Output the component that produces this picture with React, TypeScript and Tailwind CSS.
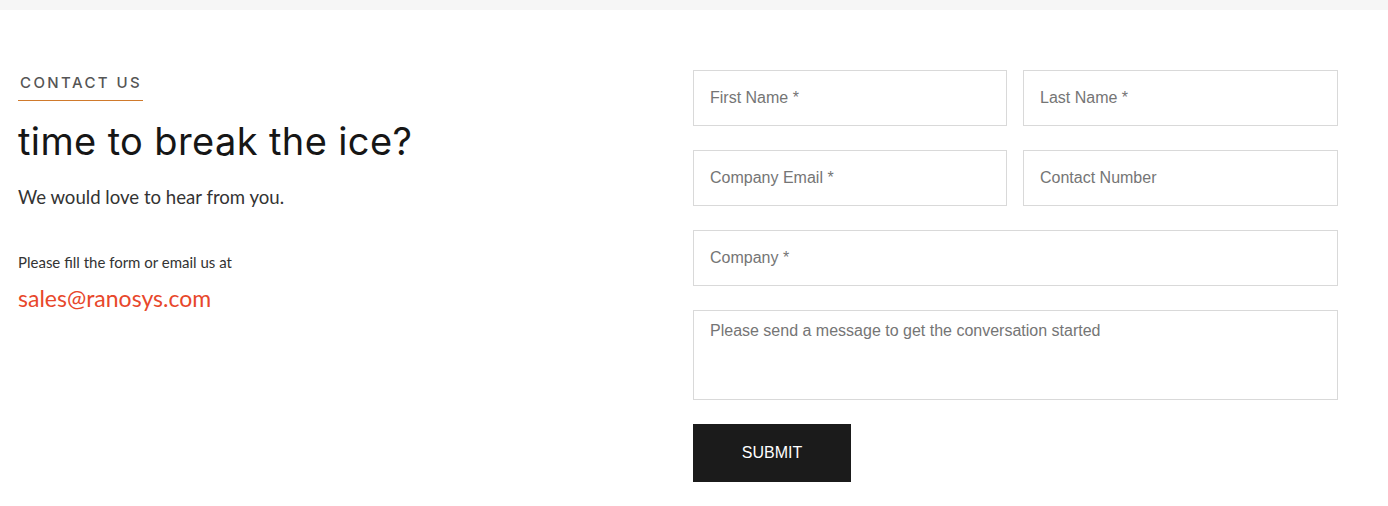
import React from "react";

const inputCls =
  "h-[56px] w-full border border-[#d9d9d9] bg-white px-4 text-[16px] text-[#333] placeholder:text-[#757575] outline-none";

export default function App() {
  return (
    <div className="min-h-[506px] w-[1388px] bg-white">
      <div className="h-[10px] bg-[#f6f6f6]" />
      <div className="flex px-[18px] pt-[60px]">
        <div className="w-[675px] shrink-0">
          <div className="inline-block border-b border-[#d07a2c] pb-[5px] pl-[2px] pr-[1px]">
            <span
              className="text-[15px] font-medium uppercase tracking-[0.16em] text-[#555]"
              style={{ fontFamily: "Inter, sans-serif" }}
            >
              Contact Us
            </span>
          </div>
          <h1
            className="mt-[17px] text-[38px] font-normal leading-[46px] tracking-[0.01em] text-[#161616]"
            style={{ fontFamily: "Inter, sans-serif" }}
          >
            time to break the ice?
          </h1>
          <p className="mt-[20px] text-[18.6px] text-[#333]" style={{ fontFamily: "Lato, sans-serif" }}>
            We would love to hear from you.
          </p>
          <p className="mt-[40px] text-[15px] text-[#333]" style={{ fontFamily: "Lato, sans-serif" }}>
            Please fill the form or email us at
          </p>
          <a className="mt-[7px] block text-[23px] text-[#e8472b]" style={{ fontFamily: "Lato, sans-serif" }}>
            sales@ranosys.com
          </a>
        </div>
        <form
          className="flex w-[645px] flex-col gap-[24px]"
          style={{ fontFamily: "'Liberation Sans', Arial, sans-serif" }}
        >
          <div className="grid grid-cols-[314px_315px] gap-[16px]">
            <input className={inputCls} placeholder="First Name *" />
            <input className={inputCls} placeholder="Last Name *" />
          </div>
          <div className="grid grid-cols-[314px_315px] gap-[16px]">
            <input className={inputCls} placeholder="Company Email *" />
            <input className={inputCls} placeholder="Contact Number" />
          </div>
          <input className={inputCls} placeholder="Company *" />
          <textarea
            className="h-[90px] w-full resize-none border border-[#d9d9d9] bg-white px-4 pt-[8px] text-[16px] text-[#333] placeholder:text-[#757575] outline-none"
            placeholder="Please send a message to get the conversation started"
          />
          <div>
            <button type="button" className="h-[58px] w-[158px] bg-[#1b1b1b] text-[16px] uppercase text-white">
              Submit
            </button>
          </div>
        </form>
      </div>
    </div>
  );
}
